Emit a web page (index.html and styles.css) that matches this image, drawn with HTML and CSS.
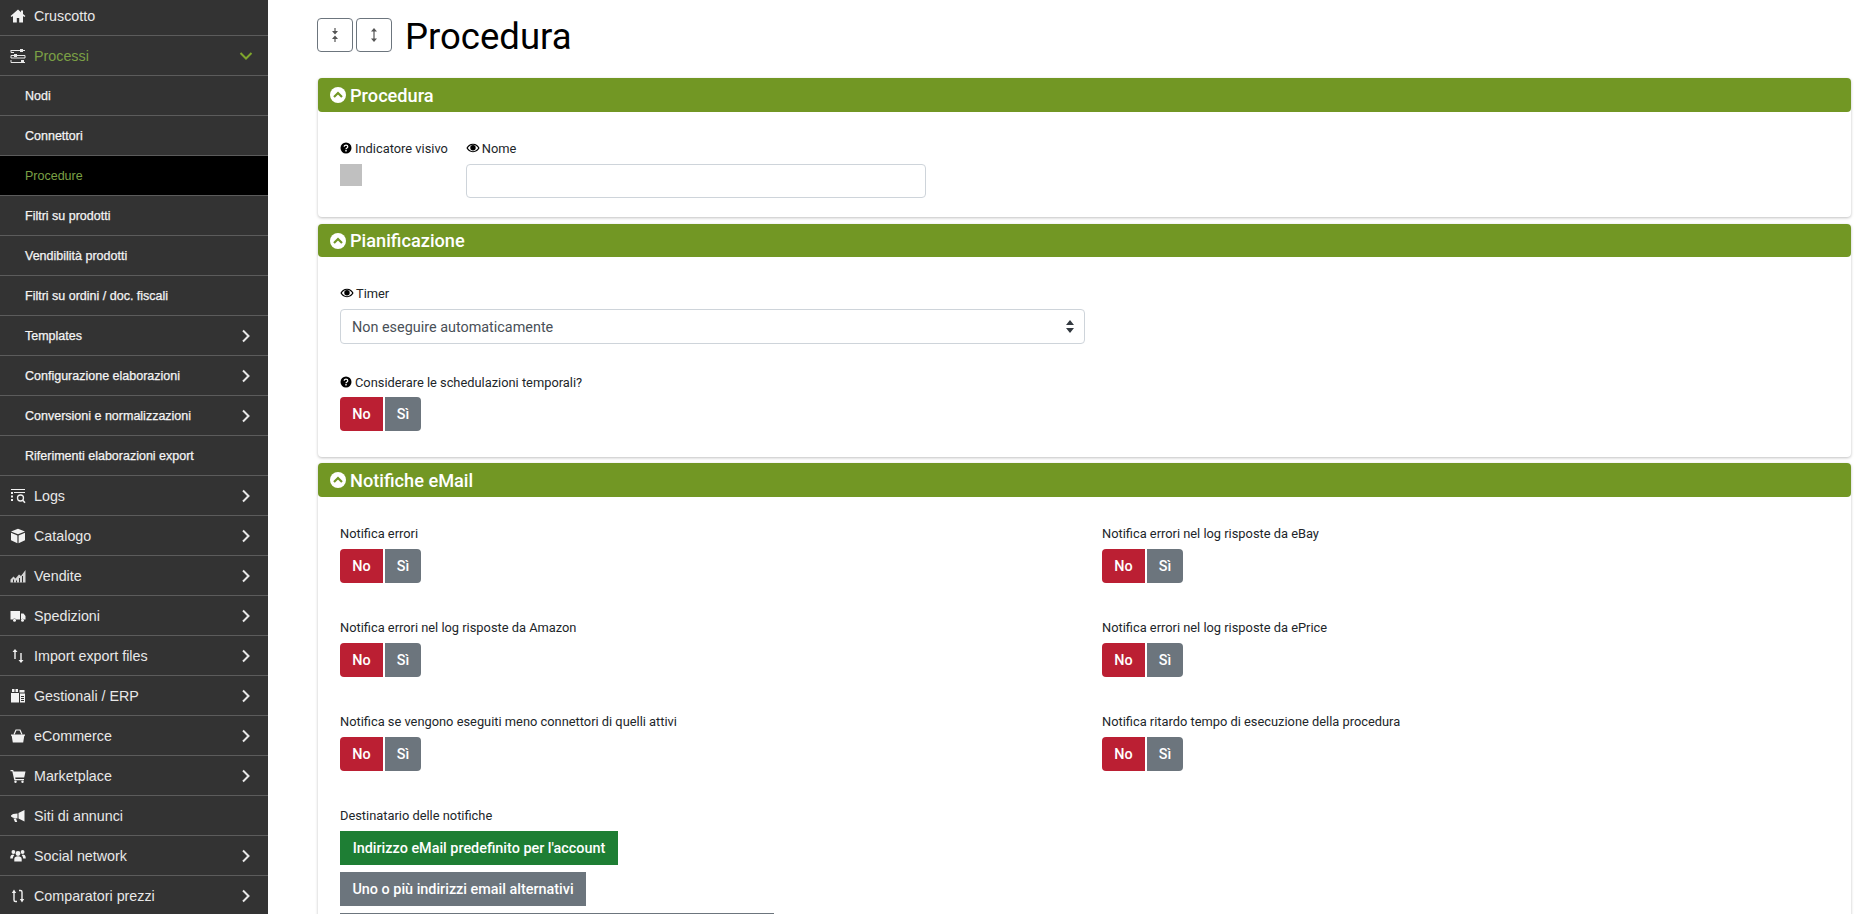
FILE: index.html
```html
<!DOCTYPE html>
<html lang="it">

<head>
    <meta charset="UTF-8">
    <title>Procedura</title>
    <link rel="stylesheet" href="styles.css">
</head>

<body>
    <svg class="defs" width="0" height="0">
        <defs>
            <symbol id="i-home" viewBox="0 0 16 16"><path d="M8 1.5 .6 8l1 1.1L3 7.900V14.500h3.800V10h2.400v4.500H13V7.900l1.400 1.200 1-1.100L13 5.900V2.500h-2v1.700z"/></symbol>
            <symbol id="i-proc" viewBox="0 0 16 16"><path fill="none" stroke="currentColor" d="M1 2.500h9m3 0h2M1 2v2.500h3M1 7.500h3m3 0h8v2.500H1V7.500m0 4.500v2.500h10m3 0h1"/><path d="M10 1h3v3h-3zM4 6h3v3H4zM11 12h3v3h-3z"/></symbol>
            <symbol id="i-logs" viewBox="0 0 16 16"><path d="M1 1h14v1H1zM1 4h2v2H1zm3 0h11v1H4zM1 7.500h2v2H1zM1 11h2v2H1z"/><circle cx="10.500" cy="10" r="3" fill="none" stroke="currentColor" stroke-width="1.300"/><path d="m12.500 12 2.500 2.800" stroke="currentColor" stroke-width="1.500"/></symbol>
            <symbol id="i-cube" viewBox="0 0 16 16"><path d="M8 .7 15 3.500 8 6.300 1 3.500zM1 4.800l6.400 2.600v7.900L1 12.300zM15 4.800 8.600 7.400v7.900l6.400-3z"/></symbol>
            <symbol id="i-chart" viewBox="0 0 16 16"><path d="M.5 14.500v-3l3-3 2 2 3.500-4 2 1.500L15.500 2v12.500z" opacity=".85"/><path d="M3 14.500v-3h1v3zm3 0v-2h1v2zm3 0V10h1v4.500zm3 0V8h1v6.500z" fill="#333"/></symbol>
            <symbol id="i-truck" viewBox="0 0 16 16"><path d="M.5 3h9.500v8.500H6.200a2 2 0 0 0-3.400 0H.5zM11 5.500h2.500L15.500 8v3.500h-1.300a2 2 0 0 0-3.200 0z"/><circle cx="4.500" cy="12.300" r="1.500"/><circle cx="12.500" cy="12.300" r="1.500"/></symbol>
            <symbol id="i-arrows" viewBox="0 0 16 16"><path d="M5 1 7.500 4H5.700v7H4.300V4H2.500zM11 15 8.500 12h1.800V5h1.400v7h1.800z"/></symbol>
            <symbol id="i-erp" viewBox="0 0 16 16"><path d="M2 1h2.500v3H2zM5.500 1H8v3H5.500zM9.500 2h5v2.500h-5zM1 5h8v9.500H1zM10 5.500h5v9h-5z"/><path d="M11 8h3v1h-3zm0 2h3v1h-3zm0 2h3v1h-3z" fill="#333"/></symbol>
            <symbol id="i-basket" viewBox="0 0 16 16"><path d="M1 6.500h14v1.300h-.7l-1.100 6.700H2.800L1.700 7.800H1z"/><path d="M4 6.500 6 2h4l2 4.500" fill="none" stroke="currentColor" stroke-width="1.200"/></symbol>
            <symbol id="i-cart" viewBox="0 0 16 16"><path d="M.5 2h2.700l.4 1.500H15.500l-1.300 6H5.200l.3 1.500h8.500v1.200H4.300L2.300 3.200H.5z"/><circle cx="5.500" cy="13.700" r="1.200"/><circle cx="12.500" cy="13.700" r="1.200"/></symbol>
            <symbol id="i-horn" viewBox="0 0 16 16"><path d="M14.500 2v11.500L8.500 10.500V5zM7.500 5.500v5L3 9.800 1 8.500v-1l2-1.500zM3.500 10.500H6l1.200 3.500H5z"/></symbol>
            <symbol id="i-users" viewBox="0 0 16 16"><circle cx="8" cy="5.500" r="2.400"/><circle cx="3.400" cy="4" r="1.900"/><circle cx="12.600" cy="4" r="1.900"/><path d="M4.300 13.500V11c0-2 1.500-2.800 3.700-2.800s3.700.8 3.700 2.800v2.500zM.3 9.500c0-2 1.200-3 3-3l1 .8c-.7.600-1.300 1.400-1.500 3.200H.3zM15.700 9.500c0-2-1.200-3-3-3l-1 .8c.7.600 1.300 1.400 1.500 3.200h2.500z"/></symbol>
            <symbol id="i-cycle" viewBox="0 0 16 16"><path fill="none" stroke="currentColor" stroke-width="1.400" d="M4 4.500V12c0 1 .5 1.500 1.500 1.500H7M12 11.500V4c0-1-.5-1.500-1.500-1.500H9"/><path d="M4 1.500 6.200 5H1.800zM12 14.500 9.800 11h4.400z"/></symbol>
            <symbol id="i-right" viewBox="0 0 10 14"><path d="m2 1.500 5.500 5.500L2 12.500" fill="none" stroke="currentColor" stroke-width="2"/></symbol>
            <symbol id="i-down" viewBox="0 0 14 10"><path d="M1.500 2 7 7.500 12.500 2" fill="none" stroke="currentColor" stroke-width="2"/></symbol>
            <symbol id="i-up-circle" viewBox="0 0 16 16"><circle cx="8" cy="8" r="8" fill="#fff"/><path d="M4 10 8 6l4 4" fill="none" stroke="#729724" stroke-width="2.200"/></symbol>
            <symbol id="i-help" viewBox="0 0 12 12"><circle cx="6" cy="6" r="5.500"/><path d="M4.200 4.700C4.200 3.700 5 3.200 6 3.200c1.100 0 1.800.6 1.800 1.500 0 1.300-1.800 1.300-1.800 2.500" fill="none" stroke="#fff" stroke-width="1.200"/><path d="M5.300 8.100h1.400v1.300H5.300z" fill="#fff"/></symbol>
            <symbol id="i-eye" viewBox="0 0 14 10"><path d="M7 .8C3.800.8 1.400 2.900.4 5c1 2.100 3.400 4.200 6.600 4.200s5.600-2.100 6.600-4.200C12.600 2.900 10.200.8 7 .8zm0 7.500C4.800 8.300 3 6.900 1.800 5 3 3.100 4.800 1.700 7 1.700s4 1.400 5.200 3.300C11 6.900 9.200 8.300 7 8.300z"/><circle cx="7" cy="4.800" r="2.700"/></symbol>
            <symbol id="i-compress" viewBox="0 0 8 16"><path d="M3.400 1h1.200v3H7L4 7.500 1 4h2.400zM4 8.500 7 12H4.600v3H3.400v-3H1z"/></symbol>
            <symbol id="i-expand" viewBox="0 0 8 16"><path d="M4 1 7 4.500H4.600v7H7L4 15 1 11.500h2.400v-7H1z"/></symbol>
        </defs>
    </svg>

    <div class="layout">
        <nav class="sidebar">
            <ul class="menu">
                <li class="menu-item"><svg class="menu-icon"><use href="#i-home"/></svg>Cruscotto</li>
                <li class="menu-item open"><svg class="menu-icon"><use href="#i-proc"/></svg>Processi<svg class="chevron-down"><use href="#i-down"/></svg></li>
                <li class="menu-item sub">Nodi</li>
                <li class="menu-item sub">Connettori</li>
                <li class="menu-item sub active">Procedure</li>
                <li class="menu-item sub">Filtri su prodotti</li>
                <li class="menu-item sub">Vendibilità prodotti</li>
                <li class="menu-item sub">Filtri su ordini / doc. fiscali</li>
                <li class="menu-item sub">Templates<svg class="chevron"><use href="#i-right"/></svg></li>
                <li class="menu-item sub">Configurazione elaborazioni<svg class="chevron"><use href="#i-right"/></svg></li>
                <li class="menu-item sub">Conversioni e normalizzazioni<svg class="chevron"><use href="#i-right"/></svg></li>
                <li class="menu-item sub">Riferimenti elaborazioni export</li>
                <li class="menu-item"><svg class="menu-icon"><use href="#i-logs"/></svg>Logs<svg class="chevron"><use href="#i-right"/></svg></li>
                <li class="menu-item"><svg class="menu-icon"><use href="#i-cube"/></svg>Catalogo<svg class="chevron"><use href="#i-right"/></svg></li>
                <li class="menu-item"><svg class="menu-icon"><use href="#i-chart"/></svg>Vendite<svg class="chevron"><use href="#i-right"/></svg></li>
                <li class="menu-item"><svg class="menu-icon"><use href="#i-truck"/></svg>Spedizioni<svg class="chevron"><use href="#i-right"/></svg></li>
                <li class="menu-item"><svg class="menu-icon"><use href="#i-arrows"/></svg>Import export files<svg class="chevron"><use href="#i-right"/></svg></li>
                <li class="menu-item"><svg class="menu-icon"><use href="#i-erp"/></svg>Gestionali / ERP<svg class="chevron"><use href="#i-right"/></svg></li>
                <li class="menu-item"><svg class="menu-icon"><use href="#i-basket"/></svg>eCommerce<svg class="chevron"><use href="#i-right"/></svg></li>
                <li class="menu-item"><svg class="menu-icon"><use href="#i-cart"/></svg>Marketplace<svg class="chevron"><use href="#i-right"/></svg></li>
                <li class="menu-item"><svg class="menu-icon"><use href="#i-horn"/></svg>Siti di annunci</li>
                <li class="menu-item"><svg class="menu-icon"><use href="#i-users"/></svg>Social network<svg class="chevron"><use href="#i-right"/></svg></li>
                <li class="menu-item"><svg class="menu-icon"><use href="#i-cycle"/></svg>Comparatori prezzi<svg class="chevron"><use href="#i-right"/></svg></li>
            </ul>
        </nav>

        <main class="content">
            <div class="page-head">
                <button class="tool-btn"><svg class="tool-icon"><use href="#i-compress"/></svg></button>
                <button class="tool-btn"><svg class="tool-icon"><use href="#i-expand"/></svg></button>
                <h1>Procedura</h1>
            </div>

            <section class="panel panel-first">
                <h2 class="panel-title"><svg class="title-icon"><use href="#i-up-circle"/></svg>Procedura</h2>
                <div class="panel-body body-first">
                    <div class="field-row">
                        <div>
                            <div class="label"><svg class="help"><use href="#i-help"/></svg>Indicatore visivo</div>
                            <div class="swatch"></div>
                        </div>
                        <div>
                            <div class="label"><svg class="eye"><use href="#i-eye"/></svg>Nome</div>
                            <input class="text-input" type="text">
                        </div>
                    </div>
                </div>
            </section>

            <section class="panel">
                <h2 class="panel-title title-short"><svg class="title-icon"><use href="#i-up-circle"/></svg>Pianificazione</h2>
                <div class="panel-body body-plan">
                    <div class="label"><svg class="eye"><use href="#i-eye"/></svg>Timer</div>
                    <select class="select-input">
                        <option>Non eseguire automaticamente</option>
                    </select>
                    <div class="label label-tight"><svg class="help"><use href="#i-help"/></svg>Considerare le schedulazioni temporali?</div>
                    <div class="toggle"><span class="btn btn-no">No</span><span class="btn btn-si">Sì</span></div>
                </div>
            </section>

            <section class="panel panel-last">
                <h2 class="panel-title"><svg class="title-icon"><use href="#i-up-circle"/></svg>Notifiche eMail</h2>
                <div class="panel-body body-mail">
                    <div class="mail-grid">
                        <div>
                            <div class="label">Notifica errori</div>
                            <div class="toggle"><span class="btn btn-no">No</span><span class="btn btn-si">Sì</span></div>
                        </div>
                        <div>
                            <div class="label">Notifica errori nel log risposte da eBay</div>
                            <div class="toggle"><span class="btn btn-no">No</span><span class="btn btn-si">Sì</span></div>
                        </div>
                        <div>
                            <div class="label">Notifica errori nel log risposte da Amazon</div>
                            <div class="toggle"><span class="btn btn-no">No</span><span class="btn btn-si">Sì</span></div>
                        </div>
                        <div>
                            <div class="label">Notifica errori nel log risposte da ePrice</div>
                            <div class="toggle"><span class="btn btn-no">No</span><span class="btn btn-si">Sì</span></div>
                        </div>
                        <div>
                            <div class="label">Notifica se vengono eseguiti meno connettori di quelli attivi</div>
                            <div class="toggle"><span class="btn btn-no">No</span><span class="btn btn-si">Sì</span></div>
                        </div>
                        <div>
                            <div class="label">Notifica ritardo tempo di esecuzione della procedura</div>
                            <div class="toggle"><span class="btn btn-no">No</span><span class="btn btn-si">Sì</span></div>
                        </div>
                    </div>
                    <div class="label">Destinatario delle notifiche</div>
                    <div class="recipients">
                        <span class="btn btn-ok">Indirizzo eMail predefinito per l'account</span>
                        <span class="btn btn-alt">Uno o più indirizzi email alternativi</span>
                        <div class="alt-input"></div>
                    </div>
                </div>
            </section>
        </main>
    </div>
</body>

</html>
```

FILE: styles.css
```css
* {
    box-sizing: border-box;
}

html,
body {
    height: 100%;
}

body {
    margin: 0;
    overflow: hidden;
    background-color: #fff;
    color: #212529;
    font-family: Roboto, sans-serif;
    font-size: 13px;
}

.defs {
    position: absolute;
}

.layout {
    display: flex;
    height: 100%;
}

/* Menu laterale */
.sidebar {
    flex: 0 0 268px;
    height: 100%;
    overflow: hidden;
    background-color: #333;
}

.menu {
    list-style: none;
    margin: -4px 0 0;
    padding: 0;
}

.menu-item {
    display: flex;
    align-items: center;
    height: 40px;
    padding: 0 17px 0 10px;
    border-bottom: 1px solid #5c5c5c;
    color: #e8e8e8;
    font-family: "Liberation Sans", Arial, sans-serif;
    font-size: 14.3px;
}

.menu-icon {
    flex: 0 0 16px;
    width: 16px;
    height: 16px;
    margin-right: 8px;
    fill: #f2f2f2;
    color: #f2f2f2;
}

.chevron {
    width: 10px;
    height: 14px;
    margin-left: auto;
    color: #e8e8e8;
}

.chevron-down {
    width: 14px;
    height: 10px;
    margin-left: auto;
    margin-right: -2px;
    color: #7fa62c;
}

.menu-item.open {
    color: #7ba045;
}

.menu-item.open .menu-icon {
    fill: #e8e8e8;
    color: #e8e8e8;
}

.menu-item.sub {
    padding-left: 25px;
    font-size: 12.5px;
    color: #f4f4f4;
    -webkit-text-stroke: 0.25px #f4f4f4;
}

.menu-item.active {
    background-color: #000;
    color: #7ba045;
    -webkit-text-stroke: 0;
}

/* Contenuto */
.content {
    flex: 1;
    min-width: 0;
    padding: 18px 15px 0 50px;
}

.page-head {
    display: flex;
    align-items: center;
    gap: 3px;
    height: 34px;
    margin: 0 0 26px -1px;
}

.page-head h1 {
    margin: 0 0 0 10px;
    padding-top: 3px;
    color: #000;
    font-size: 36.5px;
    font-weight: 400;
}

.tool-btn {
    display: flex;
    align-items: center;
    justify-content: center;
    width: 36px;
    height: 34px;
    padding: 0;
    background-color: #fff;
    border: 1px solid #6c757d;
    border-radius: 4px;
}

.tool-icon {
    width: 8px;
    height: 16px;
    fill: #555;
}

.panel {
    margin-bottom: 6px;
    border-radius: 4px;
    background-color: #fff;
    box-shadow: 0 1px 3px rgba(0, 0, 0, 0.25);
}

.panel-first {
    margin-bottom: 7px;
}

.panel-title {
    display: flex;
    align-items: center;
    height: 34px;
    margin: 0;
    padding: 0 12px;
    border-radius: 4px;
    background-color: #729724;
    color: #fff;
    font-size: 18.2px;
    font-weight: 500;
}

.title-short {
    height: 33px;
}

.title-icon {
    width: 16px;
    height: 16px;
    margin-right: 4px;
}

.panel-body {
    padding: 0 22px;
}

.body-first {
    height: 105px;
    padding-top: 28px;
}

.body-plan {
    height: 200px;
    padding-top: 28px;
}

.body-mail {
    padding-top: 28px;
}

.panel-last {
    min-height: 500px;
}

.label {
    display: flex;
    align-items: center;
    height: 16px;
    margin-bottom: 8px;
    font-size: 12.85px;
}

.label-tight {
    margin-bottom: 7px;
}

.help {
    width: 12px;
    height: 12px;
    margin-right: 3px;
}

.eye {
    width: 14px;
    height: 10px;
    margin-right: 2px;
}

.field-row {
    display: flex;
    gap: 18px;
}

.swatch {
    width: 22px;
    height: 22px;
    background-color: #c0c0c0;
}

.text-input {
    display: block;
    width: 460px;
    height: 34px;
    border: 1px solid #ced4da;
    border-radius: 4px;
    background-color: #fff;
}

.select-input {
    display: block;
    width: 745px;
    height: 35px;
    margin-bottom: 30px;
    padding: 2px 11px 0;
    border: 1px solid #ced4da;
    border-radius: 4px;
    color: #495057;
    font-family: Roboto, sans-serif;
    font-size: 14.4px;
    appearance: none;
    background: #fff url("data:image/svg+xml,%3Csvg xmlns='http://www.w3.org/2000/svg' width='8' height='13'%3E%3Cpath d='M4 0 8 5H0zM4 13 0 8h8z' fill='%23343a40'/%3E%3C/svg%3E") no-repeat right 10px center;
}

.toggle {
    display: flex;
    gap: 2px;
    height: 34px;
}

.btn {
    display: inline-flex;
    align-items: center;
    justify-content: center;
    height: 34px;
    color: #fff;
    font-size: 14.4px;
    font-weight: 500;
}

.btn-no {
    width: 43px;
    border-radius: 4px 0 0 4px;
    background-color: #bb1f33;
}

.btn-si {
    width: 36px;
    border-radius: 0 4px 4px 0;
    background-color: #6c757d;
}

.mail-grid {
    display: grid;
    grid-template-columns: 762px 1fr;
    row-gap: 36px;
    margin-bottom: 36px;
}

.recipients {
    display: flex;
    flex-direction: column;
    align-items: flex-start;
    gap: 7px;
}

.btn-ok {
    width: 278px;
    background-color: #1e7e34;
}

.btn-alt {
    width: 246px;
    background-color: #6c757d;
}

.alt-input {
    width: 434px;
    height: 34px;
    border: 1px solid #6c757d;
}
```
